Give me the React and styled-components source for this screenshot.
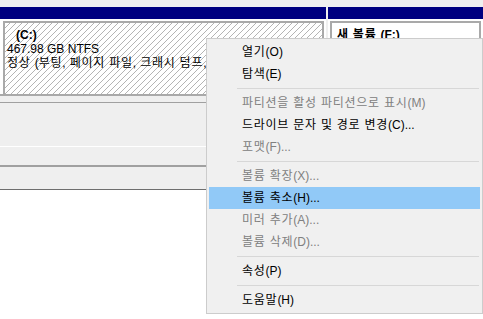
import styled, { createGlobalStyle } from "styled-components";

const Global = createGlobalStyle`
  html, body {
    margin: 0;
    padding: 0;
    background: #ffffff;
  }
  body {
    font-family: "Liberation Sans", "Noto Sans CJK KR", sans-serif;
    font-size: 12px;
    color: #000;
  }
`;

const Screen = styled.div`
  position: relative;
  width: 483px;
  height: 319px;
  overflow: hidden;
  background: #ffffff;
`;

const DiskRow = styled.div`
  display: flex;
  gap: 2px;
  padding-top: 7px;
  background: #f0f0f0;
`;

const Partition = styled.div`
  display: flex;
  flex-direction: column;
  width: ${(p) => (p.$grow ? "auto" : p.$width + "px")};
  flex: ${(p) => (p.$grow ? 1 : "none")};
  background: #ffffff;
`;

const PartHeader = styled.div`
  height: 12px;
  background: #000080;
`;

const PartBody = styled.div`
  margin: 2px 2px 0 ${(p) => p.$left}px;
  height: 66px;
  border: 2px solid #a9a9a9;
  border-bottom: none;
  padding: 5px 0 0 ${(p) => p.$pad}px;
  background: ${(p) =>
    p.$selected
      ? "repeating-linear-gradient(135deg, #ffffff 0 3.3px, #b4b4b4 3.3px 4.24px)"
      : "#ffffff"};
  line-height: 14px;
  white-space: nowrap;
  overflow: hidden;
`;

const VolName = styled.div`
  font-weight: bold;
  padding-left: ${(p) => p.$indent || 0}px;
`;

const VolLine = styled.div``;

// hangul in the reference is set a little wider than Noto's
const Ko = styled.span`
  letter-spacing: 0.75px;
`;

const BottomEdge = styled.div`
  height: 2px;
  background: #a9a9a9;
`;

const Band = styled.div`
  height: ${(p) => p.$h}px;
  background: #efefef;
  border-bottom: ${(p) => p.$line || "none"};
`;

const Menu = styled.div`
  position: absolute;
  left: 206px;
  top: 38px;
  width: 271px;
  padding: 2px;
  border: 1px solid #cccccc;
  background: #f0f0f0;
  font-size: 12px;
`;

const Item = styled.div`
  height: 22px;
  line-height: 22px;
  padding-left: 33px;
  white-space: nowrap;
  color: ${(p) => (p.$disabled ? "#808080" : "#000000")};
  background: ${(p) => (p.$active ? "#91c9f7" : "transparent")};
`;

const Separator = styled.div`
  height: 7px;
  margin: 0 1px 0 28px;
  display: flex;
  align-items: center;
  &::after {
    content: "";
    flex: 1;
    height: 1px;
    background: #d7d7d7;
  }
`;

const menu = [
  { label: "열기(O)" },
  { label: "탐색(E)" },
  { sep: true },
  { label: "파티션을 활성 파티션으로 표시(M)", disabled: true },
  { label: "드라이브 문자 및 경로 변경(C)..." },
  { label: "포맷(F)...", disabled: true },
  { sep: true },
  { label: "볼륨 확장(X)...", disabled: true },
  { label: "볼륨 축소(H)...", active: true },
  { label: "미러 추가(A)...", disabled: true },
  { label: "볼륨 삭제(D)...", disabled: true },
  { sep: true },
  { label: "속성(P)" },
  { sep: true },
  { label: "도움말(H)" },
];

const Text = ({ children }) =>
  children.split(/([\uAC00-\uD7A3 ]+)/).map((part, i) =>
    /[\uAC00-\uD7A3]/.test(part) ? <Ko key={i}>{part}</Ko> : part
  );

export default function App() {
  return (
    <Screen>
      <Global />
      <DiskRow>
        <Partition $width={326}>
          <PartHeader />
          <PartBody $selected $left={3} $pad={2}>
            <VolName $indent={9}>(C:)</VolName>
            <VolLine>467.98 GB NTFS</VolLine>
            <VolLine>
              <Text>정상 (부팅, 페이지 파일, 크래시 덤프,</Text>
            </VolLine>
          </PartBody>
          <BottomEdge />
        </Partition>
        <Partition $grow>
          <PartHeader />
          <PartBody $left={2} $pad={5}>
            <VolName>
              <Text>새 볼륨 (F:)</Text>
            </VolName>
          </PartBody>
          <BottomEdge />
        </Partition>
      </DiskRow>
      <Band $h={6} $line="1px solid #a0a0a0" />
      <Band $h={43} $line="1px solid #ffffff" />
      <Band $h={18} $line="2px solid #a0a0a0" />
      <Band $h={22} $line="1px solid #6e6e6e" />
      <Menu>
        {menu.map((m, i) =>
          m.sep ? (
            <Separator key={i} />
          ) : (
            <Item key={i} $disabled={m.disabled} $active={m.active}>
              <Text>{m.label}</Text>
            </Item>
          )
        )}
      </Menu>
    </Screen>
  );
}
